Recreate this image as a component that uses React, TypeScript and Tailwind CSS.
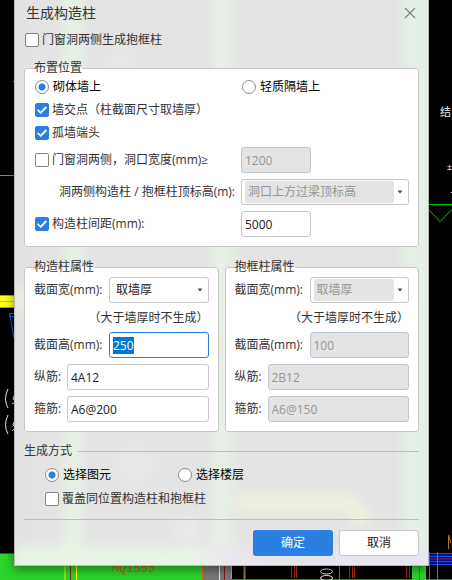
import { useEffect, useRef, useState } from 'react';

const fieldText = 'h-[26px] min-w-0 rounded-[3px] border border-[#c8c8c8] bg-white px-[3px] text-xs text-[#222] outline-none selection:bg-[#0078d7] selection:text-white focus:border-[#2a7fe0] disabled:border-[#bcc5d0] disabled:bg-[#e4e4e4] disabled:text-[#959595]';

function Radio({ name, label, checked, onChange }: { name: string; label: string; checked: boolean; onChange: () => void }) {
  return (
    <label className="flex h-[17px] items-center gap-1 text-black">
      <input
        type="radio"
        name={name}
        checked={checked}
        onChange={onChange}
        className="h-[14px] w-[14px] appearance-none rounded-full border border-[#8a8a8a] bg-white checked:bg-[radial-gradient(circle,#2a7fe0_3px,white_4px)]"
      />
      {label}
    </label>
  );
}

function Check({ label, checked, onChange }: { label: string; checked: boolean; onChange: () => void }) {
  return (
    <label className="flex h-[17px] items-center gap-[3px]">
      <span className="relative flex h-[14px] w-[14px]">
        <input
          type="checkbox"
          checked={checked}
          onChange={onChange}
          className="h-[14px] w-[14px] appearance-none rounded-[2px] border border-[#858585] bg-white checked:border-[#2a7fe0] checked:bg-[#2a7fe0]"
        />
        {checked && (
          <svg className="pointer-events-none absolute inset-0" viewBox="0 0 14 14" fill="none" stroke="white" strokeWidth="1.8">
            <path d="M2.6 6.9 5.7 9.8 11.3 4" />
          </svg>
        )}
      </span>
      {label}
    </label>
  );
}

function Dropdown({ id, options, disabled }: { id: string; options: string[]; disabled?: boolean }) {
  return (
    <div className="flex h-[26px] min-w-0 flex-1 rounded-[3px] border border-[#c8c8c8] bg-white py-px pl-[3px]">
      <select
        id={id}
        disabled={disabled}
        className="min-w-0 flex-1 appearance-none rounded-[2px] bg-white px-[3px] text-xs text-[#222] outline-none disabled:bg-[#e4e4e4] disabled:text-[#959595] disabled:opacity-100"
      >
        {options.map(o => <option key={o}>{o}</option>)}
      </select>
      <svg className="h-full w-[14px]" viewBox="0 0 14 22" fill="#4a4a55">
        <path d="M3.500 9.5H8.500L6 12.5Z" />
      </svg>
    </div>
  );
}

function PropertyGroup({ id, title, height, main, stirrup, disabled }: {
  id: string; title: string; height: string; main: string; stirrup: string; disabled?: boolean;
}) {
  const heightRef = useRef<HTMLInputElement>(null);

  useEffect(() => {
    if (!disabled) {
      heightRef.current?.focus();
      heightRef.current?.select();
    }
  }, [disabled]);

  return (
    <fieldset className="min-w-0 rounded-[3px] border border-[#c6c6c6] bg-white px-[9px] pb-[9px]">
      <legend className="h-[17px] leading-4">{title}</legend>
      <div className="flex flex-col gap-1.5 pt-px">
        <div className="flex items-center">
          <label htmlFor={id + '-width'} className="w-[75px] shrink-0 whitespace-nowrap">截面宽(mm):</label>
          <Dropdown id={id + '-width'} options={['取墙厚', '自定义']} disabled={disabled} />
        </div>
        <p className="h-[17px] text-right leading-[17px] whitespace-nowrap">（大于墙厚时不生成）</p>
        <div className="flex items-center">
          <label htmlFor={id + '-height'} className="w-[75px] shrink-0 whitespace-nowrap">截面高(mm):</label>
          <input ref={heightRef} id={id + '-height'} type="text" defaultValue={height} disabled={disabled} className={fieldText + ' flex-1'} />
        </div>
        <div className="flex items-center">
          <label htmlFor={id + '-main'} className="w-[33px] shrink-0 whitespace-nowrap">纵筋:</label>
          <input id={id + '-main'} type="text" defaultValue={main} disabled={disabled} className={fieldText + ' flex-1'} />
        </div>
        <div className="flex items-center">
          <label htmlFor={id + '-stirrup'} className="w-[33px] shrink-0 whitespace-nowrap">箍筋:</label>
          <input id={id + '-stirrup'} type="text" defaultValue={stirrup} disabled={disabled} className={fieldText + ' flex-1'} />
        </div>
      </div>
    </fieldset>
  );
}

// CAD drawing behind the dialog
function Drawing() {
  return (
    <svg className="absolute inset-0 h-full w-full" viewBox="0 0 452 580" preserveAspectRatio="xMidYMid slice">
      <rect width="452" height="580" fill="#000" />
      <path d="M0 175.5H14" stroke="#00c4c4" />
      <path d="M13 81.5h1" stroke="#1fd01f" />
      <rect y="295" width="14" height="13" fill="#a8a000" />
      <rect y="296" width="14" height="11" fill="#ffff1e" />
      <path d="M0 301.5H14" stroke="#5fe8a0" />
      <path d="M9 313.5H14M9 316.5H14M9.500 313L14 338M10 313V317" stroke="#0c5fd0" fill="none" />
      <g stroke="#eee" fill="none">
        <path d="M8 389Q3 399 8 408M8 415Q3 425 8 434" />
        <path d="M14 396l-1 3 1 1M12 404l2-1M14 422l-1 3 1 1M12 431l2-2" />
      </g>

      <rect y="554" width="203" height="26" fill="#2bd32b" />
      <path d="M0 553.500H14" stroke="#226022" />
      <path d="M65 560V580" stroke="#8be01a" strokeWidth="2" />
      <path d="M70.500 560V580" stroke="#8e2a10" />
      <path d="M76.500 560V580" stroke="#ffff00" />
      <text x="112" y="572" fontSize="12" fontFamily="Liberation Mono, monospace" fill="#c85a10">MQ1555</text>
      <rect x="203" y="560" width="28" height="20" fill="#777" />
      <path d="M202.500 560V580" stroke="#d07010" />
      <path d="M219.500 560V580" stroke="#ffff30" />
      <path d="M224.500 560V580" stroke="#801818" />
      <path d="M231.500 560V580" stroke="#b8b800" />
      <path d="M244.500 560V580" stroke="#8e7440" strokeWidth="2" />
      <path d="M291.500 560V578M294.500 560V578M296.500 560V578M349.500 560V578M352.500 560V578M354.500 560V578M406.500 560V578M409.500 560V578" stroke="#a8320c" />
      <path d="M231 579.500H452" stroke="#109a10" />
      <path d="M339.500 560V580" stroke="#00a8a8" />
      <g stroke="#eee" fill="none">
        <ellipse cx="326.500" cy="571.500" rx="6" ry="2.500" />
        <ellipse cx="326.500" cy="578" rx="6" ry="2.500" />
      </g>
      <rect x="412" y="560" width="14" height="20" fill="#2bd32b" />
      <path d="M419.500 566V580" stroke="#9a5a10" />

      <rect x="429" y="553" width="23" height="12" fill="#000d96" />
      <path d="M429 553.500H452M429 556.500H452M429 561.500H452M429 564.500H452" stroke="#1755e8" />
      <path d="M429 559H452" stroke="#5a1060" strokeWidth="2" />
      <path d="M429.500 552V580M437.500 552V580" stroke="#14b414" />
      <path d="M448.500 549V535L451 543" stroke="#c87010" fill="none" />

      <path d="M429 204.500H452M429 210L440 221.500L452 209.500" stroke="#00d000" fill="none" />
      <text x="440" y="116" fontSize="11" fontFamily="Noto Sans CJK SC, sans-serif" fill="#eee">结</text>
      <text x="447" y="170" fontSize="9" fontFamily="Liberation Sans, sans-serif" fill="#eee">±</text>
      <path d="M451 192.500H452" stroke="#eee" />
    </svg>
  );
}

// frosted colours that show through the dialog surface
function Glow() {
  return (
    <svg className="absolute inset-0 h-full w-full" viewBox="0 0 414 566" preserveAspectRatio="none">
      <defs>
        <filter id="soft" x="-50%" y="-50%" width="200%" height="200%">
          <feGaussianBlur stdDeviation="7" />
        </filter>
        <linearGradient id="foot" x1="0" x2="1">
          <stop offset="0" stopColor="#e7f6e4" />
          <stop offset="0.44" stopColor="#e7f6e4" />
          <stop offset="0.5" stopColor="#eee6f2" />
          <stop offset="0.62" stopColor="#e5e5ea" />
          <stop offset="1" stopColor="#e4e7f2" />
        </linearGradient>
      </defs>
      <g filter="url(#soft)">
        <rect x="0" y="548" width="414" height="40" fill="url(#foot)" />
        <rect x="0" y="292" width="12" height="16" fill="#f6f6e0" />
        <path d="M222 503H325Q346 503 346 526" fill="none" stroke="#f4f4de" strokeWidth="14" />
        <circle cx="120" cy="466" r="18" fill="#e9e9e9" />
        <circle cx="172" cy="530" r="12" fill="#ebebeb" />
        <circle cx="108" cy="62" r="12" fill="#e9e9e9" />
      </g>
    </svg>
  );
}

export default function App() {
  const [frame, setFrame] = useState(false);
  const [place, setPlace] = useState('masonry');
  const [crossing, setCrossing] = useState(true);
  const [wallEnd, setWallEnd] = useState(true);
  const [opening, setOpening] = useState(false);
  const [spacing, setSpacing] = useState(true);
  const [mode, setMode] = useState('element');
  const [override, setOverride] = useState(false);

  return (
    <div className="relative min-h-screen overflow-hidden bg-black font-['Open_Sans','Noto_Sans_CJK_SC',sans-serif] text-xs text-[#333]">
      <Drawing />
      <form
        onSubmit={e => e.preventDefault()}
        className="relative mr-[23px] ml-[14px] border border-t-0 border-[#b9b9b9] bg-[linear-gradient(90deg,#e2e2e2_0%,#e4e4e4_10%,#e6f0e4_13%,#e6f0e4_15%,#e4e4e4_18%,#e4e4e4_46%,#e6f0e4_49%,#e6f0e4_51%,#e4e4e4_55%,#e4e4e4_92%,#e5f1e5_96%,#e4ede6_100%)] px-[9px] pb-[9px] shadow-[0_3px_10px_rgba(0,0,0,0.45)]"
      >
        <Glow />
        <div className="relative">
          <header className="flex h-[26px] items-center justify-between pr-[3px] pl-0.5">
            <h1 className="text-sm">生成构造柱</h1>
            <button type="button" aria-label="关闭" className="text-[#808080]">
              <svg className="h-3 w-3" viewBox="0 0 12 12" fill="none" stroke="currentColor" strokeWidth="1.2">
                <path d="M1 1 11 11M11 1 1 11" />
              </svg>
            </button>
          </header>

          <div className="flex h-[27px] items-center pl-px">
            <Check label="门窗洞两侧生成抱框柱" checked={frame} onChange={() => setFrame(!frame)} />
          </div>

          <fieldset className="mt-[7px] min-w-0 rounded-[3px] border border-[#c6c6c6] bg-white px-[9px] pb-[9px]">
            <legend className="h-[17px] leading-4">布置位置</legend>
            <div className="flex flex-col gap-1.5 pt-px pl-px">
              <div className="flex">
                <div className="w-[207px]">
                  <Radio name="place" label="砌体墙上" checked={place === 'masonry'} onChange={() => setPlace('masonry')} />
                </div>
                <Radio name="place" label="轻质隔墙上" checked={place === 'light'} onChange={() => setPlace('light')} />
              </div>
              <Check label="墙交点（柱截面尺寸取墙厚）" checked={crossing} onChange={() => setCrossing(!crossing)} />
              <Check label="孤墙端头" checked={wallEnd} onChange={() => setWallEnd(!wallEnd)} />
              <div className="flex items-center">
                <div className="w-[206px]">
                  <Check label="门窗洞两侧，洞口宽度(mm)≥" checked={opening} onChange={() => setOpening(!opening)} />
                </div>
                <input type="text" aria-label="洞口宽度" defaultValue="1200" disabled={!opening} className={fieldText + ' w-[70px]'} />
              </div>
              <div className="flex items-center">
                <label htmlFor="top-level" className="w-[206px] shrink-0 pr-1.5 text-right whitespace-nowrap">洞两侧构造柱 / 抱框柱顶标高(m):</label>
                <Dropdown id="top-level" options={['洞口上方过梁顶标高', '层顶标高']} disabled={!opening} />
              </div>
              <div className="flex items-center">
                <div className="w-[206px]">
                  <Check label="构造柱间距(mm):" checked={spacing} onChange={() => setSpacing(!spacing)} />
                </div>
                <input type="text" aria-label="构造柱间距" defaultValue="5000" disabled={!spacing} className={fieldText + ' w-[70px]'} />
              </div>
            </div>
          </fieldset>

          <div className="mt-3 grid grid-cols-2 gap-1.5">
            <PropertyGroup id="column" title="构造柱属性" height="250" main="4A12" stirrup="A6@200" />
            <PropertyGroup id="frame" title="抱框柱属性" height="100" main="2B12" stirrup="A6@150" disabled={!frame} />
          </div>

          <section className="mt-[11px]">
            <h2 className="flex items-center gap-1.5 leading-4 after:h-px after:flex-1 after:bg-[#bdbdbd]">生成方式</h2>
            <div className="mt-[7px] flex flex-col gap-[7px] pl-[21px]">
              <div className="flex">
                <div className="w-[133px]">
                  <Radio name="mode" label="选择图元" checked={mode === 'element'} onChange={() => setMode('element')} />
                </div>
                <Radio name="mode" label="选择楼层" checked={mode === 'floor'} onChange={() => setMode('floor')} />
              </div>
              <Check label="覆盖同位置构造柱和抱框柱" checked={override} onChange={() => setOverride(!override)} />
            </div>
          </section>

          <footer className="mt-3 flex justify-end gap-1.5 border-t border-[#bdbdbd] pt-[10px]">
            <button type="submit" className="h-[26px] w-20 rounded-[3px] bg-[#2a7fe0] text-white">确定</button>
            <button type="button" className="h-[26px] w-20 rounded-[3px] border border-[#c8c8c8] bg-white text-[#222]">取消</button>
          </footer>
        </div>
      </form>
    </div>
  );
}
